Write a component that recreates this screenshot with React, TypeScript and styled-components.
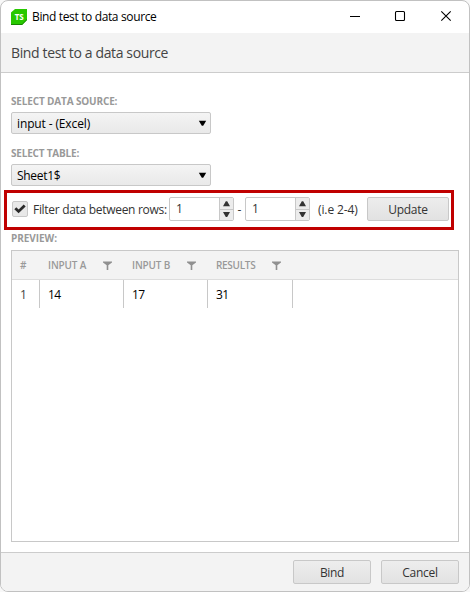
import React from "react";
import styled, { createGlobalStyle } from "styled-components";

const Global = createGlobalStyle`
  * { box-sizing: border-box; }
  html, body { margin: 0; background: #f8f8f8; }
  body { font: 12px/16px "Open Sans", "Noto Sans", sans-serif; color: #333; overflow: hidden; }
`;

const Dialog = styled.div`
  width: 470px;
  height: 592px;
  display: flex;
  flex-direction: column;
  background: #fff;
  border: 1px solid #c1c1c1;
  border-radius: 8px;
  overflow: hidden;
`;

const T = styled.span<{ $ls?: number }>`
  white-space: pre;
  letter-spacing: ${(p) => p.$ls ?? 0}px;
`;

const TitleBar = styled.header`
  height: 32px;
  flex: none;
  display: flex;
  align-items: center;
  padding-left: 10px;
  color: #000;
`;
const Logo = styled.svg`
  width: 16px;
  height: 16px;
  margin-right: 5px;
`;
const Controls = styled.div`
  margin-left: auto;
  display: flex;
  height: 100%;
  svg { width: 46px; height: 32px; display: block; }
`;
const Heading = styled.h1`
  height: 40px;
  flex: none;
  margin: 0;
  padding: 11px 10px 0;
  background: #f3f3f3;
  border-bottom: 1px solid #ccc;
  font-size: 14px;
  line-height: 18px;
  font-weight: 400;
  color: #444;
`;
const Content = styled.main`
  flex: 1;
  min-height: 0;
  display: flex;
  flex-direction: column;
  padding: 21px 10px 10px;
`;
const Label = styled.div`
  height: 18px;
  flex: none;
  font-size: 10px;
  font-weight: 700;
  line-height: 15px;
  color: #999;
`;
const Select = styled.div`
  width: 200px;
  height: 22px;
  flex: none;
  display: flex;
  align-items: center;
  justify-content: space-between;
  padding: 1px 3px 0 5px;
  margin-bottom: 12px;
  border: 1px solid #c8c8c8;
  border-radius: 2px;
  background: linear-gradient(#f4f4f4, #e9e9e9);
  color: #000;
`;
const SecondSelect = styled(Select)`
  margin-bottom: 4px;
`;
const FilterRow = styled.section`
  width: 450px;
  height: 40px;
  flex: none;
  display: flex;
  align-items: center;
  margin: 0 0 1px -7px;
  padding: 0 2px 2px 5px;
  border: 3px solid #c00000;
`;
const CheckBox = styled.div`
  width: 16px;
  height: 16px;
  border: 1px solid #c8c8c8;
  border-radius: 2px;
  background: #e8e8e8;
  margin-right: 5px;
  svg { display: block; }
`;
const FilterText = styled.div`
  width: 136px;
  padding-top: 2px;
`;
const Spinner = styled.div`
  width: 65px;
  height: 24px;
  display: flex;
  border: 1px solid #c8c8c8;
  border-radius: 2px;
  background: #fff;
`;
const SpinValue = styled.div`
  flex: 1;
  padding: 3px 0 0 6px;
`;
const SpinButtons = styled.div`
  width: 14px;
  border-left: 1px solid #c8c8c8;
  background: #ececec;
  svg { display: block; }
`;
const Dash = styled.div`
  width: 11px;
  padding-top: 2px;
  text-align: center;
`;
const Hint = styled.div`
  width: 57px;
  padding: 2px 0 0 8px;
`;
const Button = styled.button<{ $w: number }>`
  width: ${(p) => p.$w}px;
  height: 24px;
  padding: 1px 0 0;
  font: inherit;
  color: #333;
  border: 1px solid #c8c8c8;
  border-radius: 2px;
  background: linear-gradient(#ededed, #e2e2e2);
`;
const Grid = styled.div`
  flex: 1;
  margin-top: 1px;
  border: 1px solid #c8c8c8;
`;
const Row = styled.div`
  display: grid;
  grid-template-columns: 28px 84px 84px 85px;
  height: 28px;
  color: #000;
`;
const HeadRow = styled(Row)`
  height: 29px;
  background: #f3f3f3;
  border-bottom: 1px solid #ddd;
  font-size: 10px;
  font-weight: 600;
  color: #999;
`;
const HeadCell = styled.div`
  display: flex;
  align-items: center;
  justify-content: space-between;
  padding: 0 12px 0 8px;
`;
const Cell = styled.div<{ $muted?: boolean }>`
  border-right: 1px solid #c8c8c8;
  padding: 7px 0 0 8px;
  color: ${(p) => (p.$muted ? "#444" : "#000")};
`;
const Footer = styled.footer`
  height: 39px;
  flex: none;
  display: flex;
  justify-content: flex-end;
  gap: 10px;
  padding: 7px 10px 0;
  background: #f3f3f3;
  border-top: 1px solid #ccc;
`;

const Caret = () => (
  <svg width="9" height="7" viewBox="0 0 9 7">
    <path d="M.8 .8h7.4L5.2 5.8h-1.4z" fill="#000" />
  </svg>
);

const Funnel = () => (
  <svg width="9" height="9" viewBox="0 0 9 9">
    <path d="M0 .5h9v1L5.3 4.3V9H3.7V4.3L0 1.5z" fill="#909090" />
  </svg>
);

const NumberField = ({ value }: { value: number }) => (
  <Spinner>
    <SpinValue>{value}</SpinValue>
    <SpinButtons>
      <svg width="13" height="22" viewBox="0 0 13 22">
        <path d="M0 11.5h13" stroke="#c8c8c8" />
        <path d="M3 8.2 5.8 3.2h1.4L10 8.2zM3 14h7L7.2 19H5.8z" fill="#333" />
      </svg>
    </SpinButtons>
  </Spinner>
);

const columns = [
  { name: "INPUT A", value: 14, ls: -0.15 },
  { name: "INPUT B", value: 17, ls: -0.15 },
  { name: "RESULTS", value: 31, ls: -0.3 },
];

export default function App() {
  return (
    <>
      <Global />
      <Dialog>
        <TitleBar>
          <Logo viewBox="0 0 16 16">
            <path d="M4 0h12v11l-5 5H0V3.5z" fill="#28c800" />
            <path d="M0 15h11l5-5v1l-5 5H0z" fill="#168500" />
            <text x="8.2" y="10.9" textAnchor="middle" fontSize="8" fontWeight="700" fill="#fff" textLength="9">TS</text>
          </Logo>
          <T $ls={-0.36}>Bind test to data source</T>
          <Controls>
            <svg viewBox="0 0 46 32"><path d="M19 15.5h10" stroke="#000" /></svg>
            <svg viewBox="0 0 46 32"><rect x="18.5" y="10.5" width="9" height="9" rx="1" fill="none" stroke="#000" strokeWidth="1.1" /></svg>
            <svg viewBox="0 0 46 32"><path d="M18.3 10.3l9.4 9.4m0-9.4l-9.4 9.4" stroke="#000" strokeWidth="1.1" /></svg>
          </Controls>
        </TitleBar>
        <Heading><T $ls={-0.37}>Bind test to a data source</T></Heading>
        <Content>
          <Label><T $ls={-0.15}>SELECT DATA SOURCE:</T></Label>
          <Select><T $ls={-0.13}>input - (Excel)</T><Caret /></Select>
          <Label><T $ls={-0.2}>SELECT TABLE:</T></Label>
          <SecondSelect><T $ls={-0.3}>Sheet1$</T><Caret /></SecondSelect>
          <FilterRow>
            <CheckBox>
              <svg width="14" height="14" viewBox="0 0 14 14">
                <path d="M2.3 6.2 5.6 9.4 11.7 3.6" fill="none" stroke="#2b2b2b" strokeWidth="2.8" />
              </svg>
            </CheckBox>
            <FilterText><T $ls={-0.3}>Filter data between rows:</T></FilterText>
            <NumberField value={1} />
            <Dash>-</Dash>
            <NumberField value={1} />
            <Hint><T $ls={-0.1}>(i.e 2-4)</T></Hint>
            <Button $w={82}><T $ls={-0.3}>Update</T></Button>
          </FilterRow>
          <Label><T $ls={-0.05}>PREVIEW:</T></Label>
          <Grid>
            <HeadRow>
              <HeadCell>#</HeadCell>
              {columns.map((c) => (
                <HeadCell key={c.name}><T $ls={c.ls}>{c.name}</T><Funnel /></HeadCell>
              ))}
            </HeadRow>
            <Row>
              <Cell $muted>1</Cell>
              {columns.map((c) => (
                <Cell key={c.name}><T $ls={-0.5}>{c.value}</T></Cell>
              ))}
            </Row>
          </Grid>
        </Content>
        <Footer>
          <Button $w={78}><T $ls={-0.35}>Bind</T></Button>
          <Button $w={78}><T $ls={-0.3}>Cancel</T></Button>
        </Footer>
      </Dialog>
    </>
  );
}
